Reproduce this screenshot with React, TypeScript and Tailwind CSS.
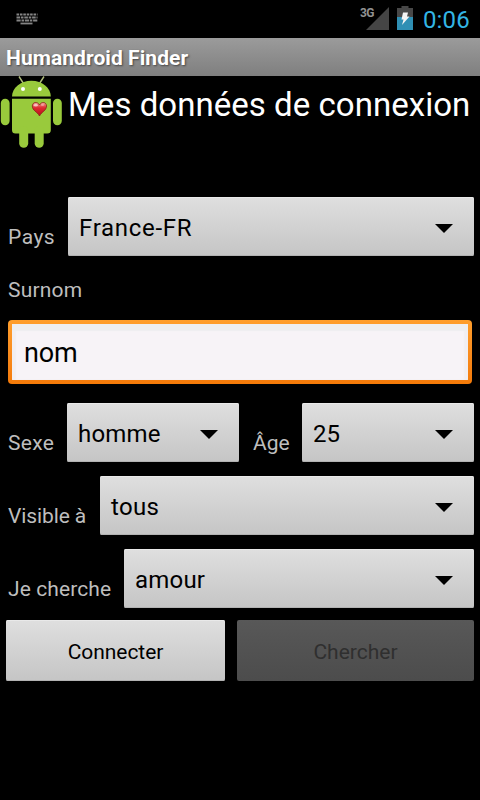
import type { ReactNode } from "react";
import { clsx } from "clsx";

type FieldLabelProps = {
  children: ReactNode;
  className?: string;
};

function FieldLabel({ children, className }: FieldLabelProps) {
  return (
    <span
      className={clsx(
        "shrink-0 whitespace-nowrap text-[21px] leading-[25px] text-[#bebebe]",
        className,
      )}
    >
      {children}
    </span>
  );
}

type SpinnerProps = {
  value: string;
  className?: string;
  textClassName?: string;
};

/** Gingerbread-style dropdown, closed state. */
function Spinner({ value, className, textClassName }: SpinnerProps) {
  return (
    <button
      type="button"
      className={clsx(
        "flex h-[59px] items-center justify-between rounded-[2px] pl-[11px] pr-[21px] text-black",
        "bg-linear-to-b from-[#dfdfdf] to-[#c5c5c5]",
        "shadow-[inset_0_1px_0_#e9e9e9,inset_0_-1px_0_#b2b2b2]",
        className,
      )}
    >
      <span className={clsx("pt-[3px] text-2xl leading-[28px]", textClassName)}>{value}</span>
      <svg viewBox="0 0 18 9" className="mt-1 h-[9px] w-[18px]" aria-hidden="true">
        <path d="M0 0h18L9 9z" fill="#000" />
      </svg>
    </button>
  );
}

function KeyboardIcon() {
  return (
    <svg viewBox="0 0 22 12" className="h-[12px] w-[22px]" aria-hidden="true">
      <g stroke="#858585" strokeWidth="1.8" fill="none">
        <path d="M.5 1.500h21" strokeDasharray="2.600 .8" />
        <path d="M.5 4.500h21" strokeDasharray="3.600 .8 2.600 .8" />
        <path d="M.5 7.500h21" strokeDasharray="4.200 .8 2.500 .8" />
        <path d="M4.500 10.500h12" />
      </g>
    </svg>
  );
}

function SignalIcon() {
  return (
    <div className="relative flex h-[24px] w-[29px] items-end justify-end">
      <svg viewBox="0 0 23 23" className="h-[23px] w-[23px]" aria-hidden="true">
        <path d="M23 0v23H0z" fill="#454545" />
      </svg>
      <span className="absolute left-0 top-0 text-[12px] font-bold leading-[14px] tracking-[-0.5px] text-[#929292]">
        3G
      </span>
    </div>
  );
}

function BatteryIcon() {
  return (
    <svg viewBox="0 0 16 24" className="h-[24px] w-[16px]" aria-hidden="true">
      <path d="M4.500 0h7v2H16v9H0V2h4.500z" fill="#484848" />
      <path d="M0 11h16v13H0z" fill="#2f8fb4" />
      <path d="M6 6.500h5l-1 4h2.500L5 19l1.500-5.500H4.500z" fill="#f4f4f4" />
    </svg>
  );
}

function StatusBar() {
  return (
    <div className="flex h-[38px] justify-between bg-black pl-[16px] pr-[10px]">
      <div className="pt-[13px]">
        <KeyboardIcon />
      </div>
      <div className="flex">
        <div className="pt-[6px]">
          <SignalIcon />
        </div>
        <div className="ml-[8px] pt-[6px]">
          <BatteryIcon />
        </div>
        <span className="ml-[10px] pt-[6px] text-2xl leading-[29px] tracking-[0.2px] text-[#33b5e5]">
          0:06
        </span>
      </div>
    </div>
  );
}

function AndroidLogo() {
  return (
    <svg viewBox="0 0 62 74" className="h-[74px] w-[62px] shrink-0" aria-hidden="true">
      <path d="M19 .5l4.500 7M44 .5l-4.500 7" stroke="#b0bd7c" strokeWidth="1.4" />
      <g fill="#99ca3c">
        <path d="M12 20.500C12 12 20.500 4.700 31.400 4.700S50.800 12 50.800 20.500z" />
        <path d="M12 22.700h38.800V54a3.500 3.500 0 0 1-3.500 3.500h-31.800A3.500 3.500 0 0 1 12 54z" />
        <rect x=".8" y="22.700" width="8.800" height="26.500" rx="4.400" />
        <rect x="53" y="22.700" width="8.800" height="26.500" rx="4.400" />
        <rect x="19.200" y="50" width="9" height="21.700" rx="4.500" />
        <rect x="34.700" y="50" width="9" height="21.700" rx="4.500" />
      </g>
      <circle cx="23" cy="13" r="2" fill="#fff" />
      <circle cx="39.800" cy="13" r="2" fill="#fff" />
      <defs>
        <linearGradient id="heart" x1="0" y1="0" x2="0" y2="1">
          <stop offset="0" stopColor="#f3a39a" />
          <stop offset=".4" stopColor="#df2a30" />
          <stop offset="1" stopColor="#b3101c" />
        </linearGradient>
      </defs>
      <path
        d="M39.500 40C37.500 36 32.300 34.500 32.300 30c0-4 5.200-5 7.200-1 2-4 7-3 7 1 0 4.500-5 6-7 10z"
        fill="url(#heart)"
        stroke="#862018"
        strokeWidth=".8"
      />
      <ellipse cx="35.800" cy="29.300" rx="2" ry="1.300" fill="#fff" opacity=".6" />
      <ellipse cx="42.500" cy="29" rx="1.600" ry="1" fill="#fff" opacity=".35" />
    </svg>
  );
}

export default function App() {
  return (
    <div className="flex h-[800px] w-[480px] flex-col overflow-hidden bg-black font-[Roboto,sans-serif]">
      <StatusBar />

      <div className="h-[38px] bg-linear-to-b from-[#9b9b9b] to-[#7f7f7f] pl-[6px]">
        <h1 className="text-[21px] font-bold leading-[41px] tracking-[0.06px] text-white [text-shadow:1px_1px_2px_#444]">
          Humandroid Finder
        </h1>
      </div>

      <header className="flex h-[121px] items-start">
        <AndroidLogo />
        <h2 className="ml-[6px] mt-[9px] whitespace-nowrap text-[33px] leading-[40px] tracking-[0.04px] text-white">
          Mes données de connexion
        </h2>
      </header>

      <form className="flex flex-col">
        <div className="flex pl-[8px] pr-[6px]">
          <FieldLabel className="mt-[28px] w-[60px] tracking-[0.5px]">Pays</FieldLabel>
          <Spinner value="France-FR" className="flex-1" textClassName="tracking-[0.7px]" />
        </div>

        <div className="h-[64px] pl-[8px] pt-[22px]">
          <FieldLabel className="block tracking-[0.2px]">Surnom</FieldLabel>
        </div>

        <div className="mx-[8px] h-[64px] rounded-[4px] bg-linear-to-b from-[#ff9e2c] to-[#f47a08] p-[4px]">
          <input
            type="text"
            defaultValue="nom"
            className="block h-[56px] w-full rounded-[1px] bg-[#f7f3f7] pl-[12px] pt-[2px] text-[27px] leading-[32px] tracking-[-0.2px] text-black shadow-[inset_0_7px_1px_#eeeef0,inset_4px_0_2px_#f1eef1,inset_-4px_0_2px_#f1eef1] outline-none"
          />
        </div>

        <div className="mt-[19px] flex pl-[8px] pr-[6px]">
          <FieldLabel className="mt-[28px] w-[59px] tracking-[0.3px]">Sexe</FieldLabel>
          <Spinner value="homme" className="w-[172px]" textClassName="tracking-[0.2px]" />
          <FieldLabel className="ml-[14px] mt-[28px] w-[49px]">Âge</FieldLabel>
          <Spinner value="25" className="flex-1" />
        </div>

        <div className="mt-[14px] flex pl-[8px] pr-[6px]">
          <FieldLabel className="mt-[28px] w-[92px] tracking-[-0.1px]">Visible à</FieldLabel>
          <Spinner value="tous" className="flex-1" textClassName="tracking-[0.3px]" />
        </div>

        <div className="mt-[14px] flex pl-[8px] pr-[6px]">
          <FieldLabel className="mt-[28px] w-[116px] tracking-[0.1px]">Je cherche</FieldLabel>
          <Spinner value="amour" className="flex-1" textClassName="tracking-[0.2px]" />
        </div>

        <div className="mt-[12px] flex gap-[12px] px-[6px]">
          <button
            type="button"
            className="h-[61px] w-[219px] rounded-[2px] bg-linear-to-b from-[#dfdfdf] to-[#c5c5c5] pt-[4px] text-[21px] tracking-[-0.05px] text-black shadow-[inset_0_1px_0_#e9e9e9,inset_0_-1px_0_#b2b2b2]"
          >
            Connecter
          </button>
          <button
            type="button"
            disabled
            className="h-[61px] flex-1 rounded-[2px] bg-linear-to-b from-[#585858] to-[#4c4c4c] pt-[4px] text-[21px] text-[#2f2f2f]"
          >
            Chercher
          </button>
        </div>
      </form>
    </div>
  );
}
